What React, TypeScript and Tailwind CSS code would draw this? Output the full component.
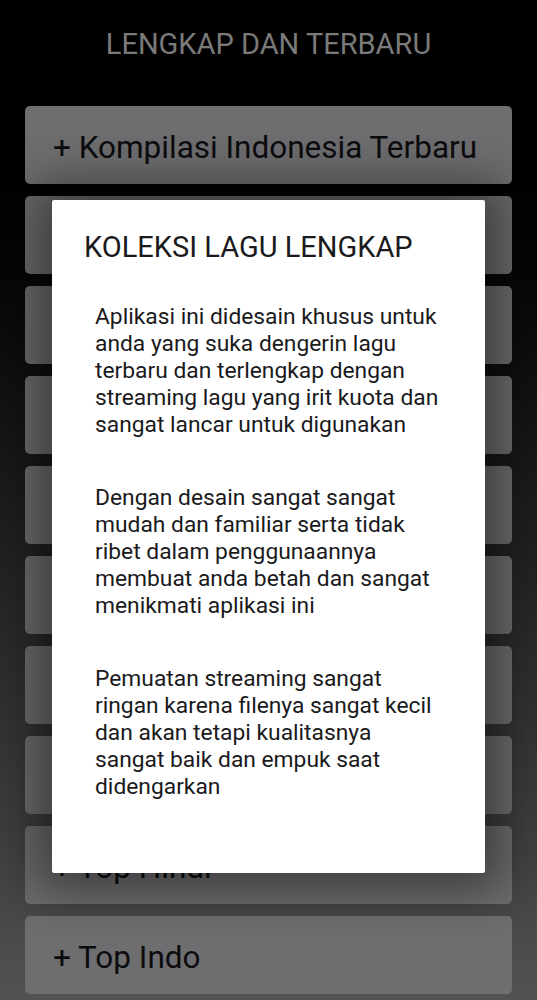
import React from 'react';

// labels hidden behind the dialog are left empty
const menu = [
  '+ Kompilasi Indonesia Terbaru',
  '',
  '',
  '',
  '',
  '',
  '',
  '',
  '+ Top Hindi',
  '+ Top Indo',
];

const paragraphs = [
  [
    'Aplikasi ini didesain khusus untuk',
    'anda yang suka dengerin lagu',
    'terbaru dan terlengkap dengan',
    'streaming lagu yang irit kuota dan',
    'sangat lancar untuk digunakan',
  ],
  [
    'Dengan desain sangat sangat',
    'mudah dan familiar serta tidak',
    'ribet dalam penggunaannya',
    'membuat anda betah dan sangat',
    'menikmati aplikasi ini',
  ],
  [
    'Pemuatan streaming sangat',
    'ringan karena filenya sangat kecil',
    'dan akan tetapi kualitasnya',
    'sangat baik dan empuk saat',
    'didengarkan',
  ],
];

export default function App() {
  return (
    <div
      className="relative w-[537px] h-[1000px] overflow-hidden bg-gradient-to-b from-black via-[#1c1c1e] to-[#525254]"
      style={{ fontFamily: 'Roboto, "Noto Sans", sans-serif' }}
    >
      <header className="h-[88px] flex items-center justify-center">
        <h1 className="text-[29px] leading-[32px] text-[#7a7a7a]">LENGKAP DAN TERBARU</h1>
      </header>

      <div className="mt-[18px] px-[25px] flex flex-col gap-[12px]">
        {menu.map((label, i) => (
          <button
            key={i}
            className="h-[78px] w-full rounded-[5px] bg-[#6e6e71] text-left pl-[28px] pt-[6px] text-[31.5px] text-[#0c0c0e]"
          >
            {label}
          </button>
        ))}
      </div>

      {/* dialog */}
      <div className="absolute left-[52px] top-[200px] w-[433px] h-[673px] bg-white rounded-[2px] shadow-[0_0_48px_18px_rgba(0,0,0,0.45)] pt-[31px]">
        <h2 className="pl-[32px] text-[29px] leading-[32px] text-[#1a1a1c]">KOLEKSI LAGU LENGKAP</h2>
        <div className="mt-[40px] pl-[43px] flex flex-col gap-[46px]">
          {paragraphs.map((lines, i) => (
            <p key={i} className="text-[22.8px] leading-[27px] text-[#1a1a1c] whitespace-nowrap">
              {lines.map((l) => (
                <span key={l} className="block">
                  {l}
                </span>
              ))}
            </p>
          ))}
        </div>
      </div>
    </div>
  );
}
